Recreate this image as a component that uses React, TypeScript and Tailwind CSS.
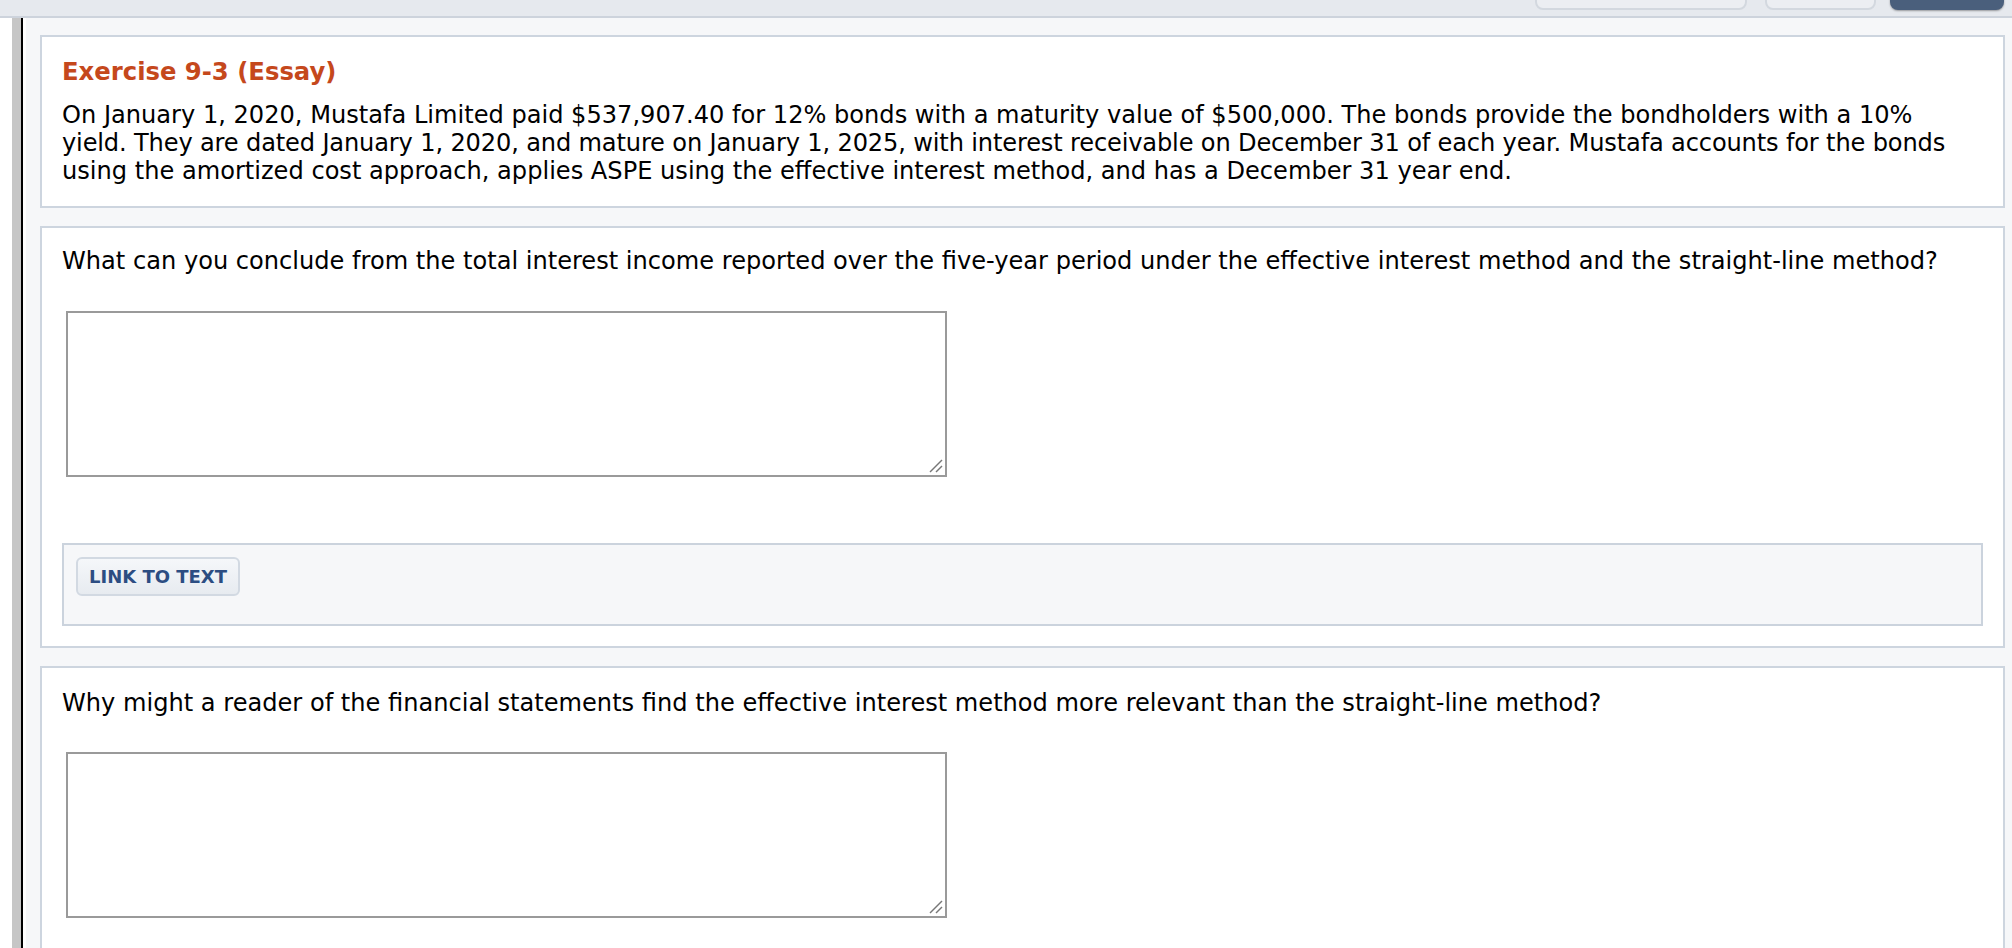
import React from "react";

function Card({ children, className = "" }: { children: React.ReactNode; className?: string }) {
  return (
    <div className={"shrink-0 bg-white border-2 border-[#cdd5df] px-[20px] " + className}>{children}</div>
  );
}

function Answer({ label, className = "" }: { label: string; className?: string }) {
  return (
    <div className={"relative ml-[4px] w-[881px] h-[166px] " + className}>
      <textarea
        aria-label={label}
        className="block w-full h-full resize-none border-2 border-[#9a9a9a] bg-white outline-none"
      />
      <svg
        className="absolute right-[4px] bottom-[4px] pointer-events-none"
        width="14"
        height="14"
        viewBox="0 0 14 14"
        aria-hidden="true"
      >
        <line x1="13" y1="1" x2="1" y2="13" stroke="#777" strokeWidth="1.5" />
        <line x1="13" y1="7" x2="7" y2="13" stroke="#777" strokeWidth="1.5" />
      </svg>
    </div>
  );
}

export default function App() {
  return (
    <div className="w-[2012px] h-[948px] overflow-hidden bg-[#f6f7f9] flex flex-col font-['DejaVu_Sans','Verdana',sans-serif] text-black">
      <header className="h-[18px] shrink-0 bg-[#e6e9ee] border-b-2 border-[#cdd3dc] flex justify-end items-end pb-[6px] pr-[8px] overflow-hidden">
        <div className="w-[212px] h-[30px] shrink-0 rounded-[8px] bg-[#eceef2] border-2 border-[#d3d8df]" />
        <div className="w-[111px] h-[30px] shrink-0 ml-[18px] rounded-[8px] bg-[#eceef2] border-2 border-[#d3d8df]" />
        <div className="w-[114px] h-[30px] shrink-0 ml-[14px] rounded-[8px] bg-[#4a5f7c] shadow-[0_1px_2px_rgba(0,0,0,0.35)]" />
      </header>
      <div className="flex flex-1 min-h-0">
        <div className="w-[12px] shrink-0 bg-white" />
        <div className="w-[9px] shrink-0 bg-[#c6c6c6]" />
        <div className="w-[2px] shrink-0 bg-black" />
        <div className="w-[3px] shrink-0 bg-white" />
        <main className="flex-1 min-w-0 pl-[14px] pr-[7px] pt-[17px] flex flex-col gap-[18px]">
          <Card className="pt-[21px] pb-[20px]">
            <h1 className="text-[24.3px] leading-[28px] font-bold text-[#c5481c]">Exercise 9-3 (Essay)</h1>
            <p className="mt-[15px] text-[24.1px] leading-[28.2px]">
              On January 1, 2020, Mustafa Limited paid $537,907.40 for 12% bonds with a maturity value of $500,000. The bonds provide the bondholders with a 10%
              <br />
              <span className="tracking-[-0.15px]">
                yield. They are dated January 1, 2020, and mature on January 1, 2025, with interest receivable on December 31 of each year. Mustafa accounts for the bonds
              </span>
              <br />
              using the amortized cost approach, applies ASPE using the effective interest method, and has a December 31 year end.
            </p>
          </Card>

          <Card className="pt-[19px] pb-[20px]">
            <p className="text-[24.1px] leading-[28.2px] whitespace-nowrap">
              What can you conclude from the total interest income reported over the five-year period under the effective interest method and the straight-line method?
            </p>
            <Answer label="Answer 1" className="mt-[36px]" />
            <div className="mt-[66px] border-2 border-[#cbd3dd] bg-[#f6f7f9] pt-[12px] pb-[28px] pl-[12px]">
              <button
                type="button"
                className="w-[164px] h-[39px] rounded-[6px] border-2 border-[#d2d9e2] bg-gradient-to-b from-[#f5f7fa] to-[#e7ebf0] text-[18px] font-bold text-[#2c4d82] flex items-center justify-center"
              >
                LINK TO TEXT
              </button>
            </div>
          </Card>

          <Card className="pt-[21px] pb-[20px]">
            <p className="text-[24.1px] leading-[28.2px] whitespace-nowrap">
              Why might a reader of the financial statements find the effective interest method more relevant than the straight-line method?
            </p>
            <Answer label="Answer 2" className="mt-[35px]" />
            <div className="h-[60px]" />
          </Card>
        </main>
      </div>
    </div>
  );
}
